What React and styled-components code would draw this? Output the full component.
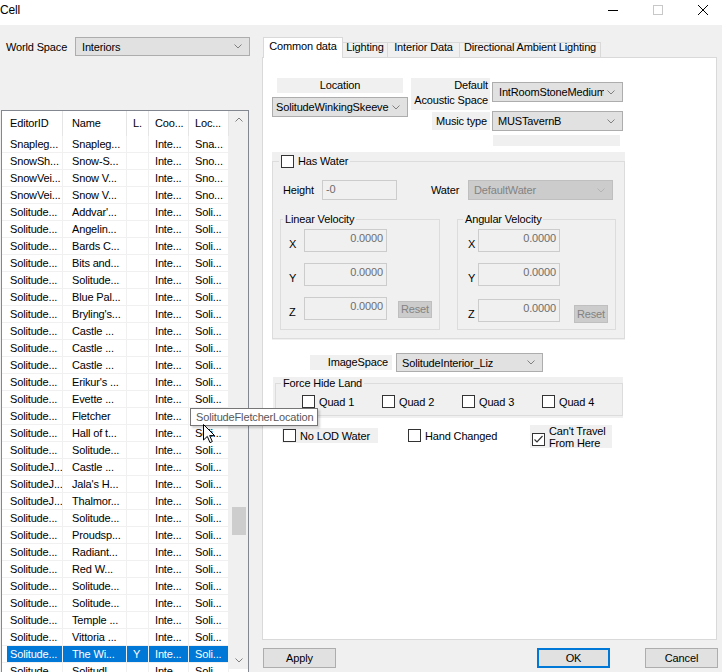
import React from "react"
import styled, { createGlobalStyle } from "styled-components"

const FONT = `"Liberation Sans", Arial, sans-serif`

const GlobalStyle = createGlobalStyle`
  html, body { margin: 0; padding: 0; background: #f0f0f0; }
  * { box-sizing: border-box; }
`

const Window = styled.div`
  position: relative;
  width: 722px;
  height: 672px;
  overflow: hidden;
  background: #f0f0f0;
  font-family: ${FONT};
  font-size: 11px;
  letter-spacing: -0.15px;
  color: #000;
`

/* title bar */

const TitleBar = styled.div`
  height: 25px;
  background: #fff;
  display: flex;
  align-items: flex-start;
`

const Title = styled.div`
  flex: 1;
  font-size: 12px;
  line-height: 14px;
  padding-top: 3px;
`

const Controls = styled.div`
  display: flex;
  gap: 35px;
  padding: 5px 14px 0 0;
`

/* layout */

const Body = styled.div`
  display: flex;
  height: 647px;
  padding-top: 12px;
`

const LeftPane = styled.div`
  width: 251px;
  flex: none;
  padding-left: 1px;
  display: flex;
  flex-direction: column;
`

const WorldRow = styled.div`
  display: flex;
  align-items: center;
  height: 19px;
  padding-left: 5px;
`

const Label = styled.span`
  flex: none;
  width: ${p => p.$w}px;
  margin-left: ${p => p.$ml || 0}px;
  white-space: nowrap;
`

/* combo box */

const ComboBox = styled.div`
  flex: none;
  display: flex;
  align-items: center;
  width: ${p => p.$w}px;
  height: ${p => p.$h || 20}px;
  margin: ${p => p.$m || "0"};
  padding-left: ${p => p.$pad ?? 5}px;
  background: ${p => (p.$disabled ? "#cccccc" : "#e1e1e1")};
  border: 1px solid ${p => (p.$disabled ? "#bfbfbf" : "#adadad")};
  color: ${p => (p.$disabled ? "#838383" : "#000")};
`

const ComboText = styled.span`
  flex: 1;
  overflow: hidden;
  white-space: nowrap;
`

const Arrow = styled.svg`
  flex: none;
  margin: 0 7px 0 3px;
`

const Chevron = ({ dim, up }) => (
  <Arrow width="8" height="5" viewBox="0 0 8 5">
    <polyline
      points={up ? "0.5,4.5 4,1 7.5,4.5" : "0.5,0.5 4,4 7.5,0.5"}
      fill="none"
      stroke={dim ? "#b4b4b4" : "#808080"}
      strokeWidth="1"
    />
  </Arrow>
)

function Combo({ value, ...rest }) {
  return (
    <ComboBox {...rest}>
      <ComboText>{value}</ComboText>
      <Chevron dim={rest.$disabled} />
    </ComboBox>
  )
}

/* list view */

const ListView = styled.div`
  flex: none;
  margin-top: 54px;
  width: 248px;
  height: 566px;
  border: 1px solid #828790;
  background: #fff;
  display: flex;
`

const ListColumns = styled.div`
  width: 227px;
  flex: none;
  overflow: hidden;
`

const HeaderRow = styled.div`
  display: flex;
  height: 25px;
`

const HeaderCell = styled.div`
  flex: none;
  width: ${p => p.$w}px;
  padding-left: ${p => p.$pad}px;
  line-height: 25px;
  border-right: 1px solid #e5e5e5;
  white-space: nowrap;
  overflow: hidden;
`

const Row = styled.div`
  display: flex;
  height: 17px;
  padding-left: 5px;
  border-bottom: 1px solid #f0f0f0;
`

const Cell = styled.div`
  flex: none;
  width: ${p => p.$w}px;
  padding-left: ${p => p.$pad}px;
  line-height: 16px;
  border-right: 1px solid #f0f0f0;
  white-space: nowrap;
  overflow: hidden;
  background: ${p => (p.$sel ? "#0078d7" : "transparent")};
  color: ${p => (p.$sel ? "#fff" : "#000")};
`

const ScrollBar = styled.div`
  width: 19px;
  height: 558px;
  flex: none;
  background: #f0f0f0;
  display: flex;
  flex-direction: column;
`

const ScrollBtn = styled.div`
  height: 17px;
  flex: none;
  display: flex;
  align-items: center;
  justify-content: center;
  & > svg { margin: 0; }
`

const Track = styled.div`
  flex: 1;
`

const Thumb = styled.div`
  margin: ${p => p.$offset}px 0 0 3px;
  width: 14px;
  height: 28px;
  background: #cdcdcd;
`

/* right side */

const RightPane = styled.div`
  width: 461px;
  flex: none;
  margin-left: 10px;
  display: flex;
  flex-direction: column;
`

const Tabs = styled.div`
  display: flex;
  align-items: flex-end;
  height: 21px;
  padding-left: 2px;
  margin-bottom: -1px;
  position: relative;
  z-index: 1;
`

const Tab = styled.div`
  flex: none;
  width: ${p => p.$w}px;
  margin-left: -1px;
  height: ${p => (p.$active ? 21 : 16)}px;
  background: ${p => (p.$active ? "#fff" : "#f0f0f0")};
  border: 1px solid #d9d9d9;
  border-bottom: ${p => (p.$active ? "none" : "1px solid #d9d9d9")};
  text-align: center;
  white-space: nowrap;
  padding-top: ${p => (p.$active ? 2 : 0)}px;
  line-height: ${p => (p.$active ? 13 : 9)}px;
  &:first-child { margin-left: 0; }
`

const TabPanel = styled.div`
  margin-left: 1px;
  width: 455px;
  height: 583px;
  border: 1px solid #d9d9d9;
  background: #fff;
  display: flex;
  flex-direction: column;
  align-items: flex-start;
`

const ButtonRow = styled.div`
  display: flex;
  margin-top: 8px;
  padding: 0 4px 0 2px;
`

const Button = styled.div`
  width: 73px;
  height: 20px;
  margin-left: ${p => p.$ml || 0}px;
  background: #e1e1e1;
  border: ${p => (p.$default ? "2px solid #0078d7" : "1px solid #adadad")};
  line-height: ${p => (p.$default ? 16 : 18)}px;
  text-align: center;
`

const Spacer = styled.div`
  flex: 1;
`

/* tab contents */

const TopSection = styled.div`
  display: flex;
  align-items: flex-start;
  margin: 20px 0 0 9px;
`

const Column = styled.div`
  display: flex;
  flex-direction: column;
  align-items: ${p => p.$align || "stretch"};
  width: ${p => p.$w}px;
  margin-left: ${p => p.$ml || 0}px;
`

const StaticText = styled.div`
  background: #f0f0f0;
  width: ${p => (p.$w ? `${p.$w}px` : "auto")};
  height: ${p => p.$h}px;
  line-height: ${p => p.$lh || p.$h}px;
  margin: ${p => p.$m || "0"};
  text-align: ${p => p.$align || "left"};
  padding-right: ${p => p.$pr || 0}px;
  white-space: nowrap;
`

const ShadedPanel = styled.div`
  background: #f0f0f0;
  width: ${p => p.$w}px;
  margin: ${p => p.$m};
  padding: ${p => p.$pad};
`

const GroupBox = styled.fieldset`
  margin: 0 0 0 ${p => p.$ml || 0}px;
  padding: 0;
  min-width: 0;
  width: ${p => p.$w}px;
  border: 1px solid #dcdcdc;
`

const Legend = styled.legend`
  margin-left: ${p => p.$ml}px;
  padding: 0 2px;
  line-height: ${p => p.$lh}px;
  height: ${p => p.$lh}px;
  white-space: nowrap;
`

const LegendInner = styled.span`
  display: inline-flex;
  align-items: center;
  gap: 4px;
  height: 100%;
`

const GroupBody = styled.div`
  padding: ${p => p.$pad};
  display: flex;
  flex-direction: ${p => p.$dir || "row"};
  gap: ${p => p.$gap || 0}px;
`

const FieldRow = styled.div`
  display: flex;
  align-items: center;
  height: ${p => p.$h}px;
  margin: ${p => p.$m || "0"};
  padding-left: ${p => p.$pl || 0}px;
`

const TextBox = styled.div`
  flex: none;
  width: ${p => p.$w}px;
  height: ${p => p.$h}px;
  margin-left: ${p => p.$ml || 0}px;
  border: 1px solid #cccccc;
  background: #f0f0f0;
  color: #6d6d6d;
  text-align: ${p => p.$align || "left"};
  padding: 0 3px;
  line-height: ${p => p.$lh || 17}px;
`

const AxisLabel = styled.span`
  flex: none;
  width: ${p => p.$w}px;
  padding-top: 7px;
`

const VRow = styled.div`
  display: flex;
  align-items: center;
  height: 23px;
  margin-top: ${p => p.$nudge || 0}px;
`

const ResetButton = styled.div`
  flex: none;
  width: 34px;
  height: ${p => p.$h}px;
  margin: ${p => p.$top || 0}px 0 0 ${p => p.$ml}px;
  background: #cccccc;
  border: 1px solid #bfbfbf;
  color: #838383;
  text-align: center;
  line-height: ${p => p.$h - 2}px;
`

const Box = styled.span`
  flex: none;
  width: 13px;
  height: 13px;
  margin-top: ${p => p.$top || 0}px;
  border: 1px solid #333;
  background: #fff;
  display: inline-flex;
  align-items: center;
  justify-content: center;
`

function CheckBox({ checked, top }) {
  return (
    <Box $top={top}>
      {checked && (
        <svg width="11" height="11" viewBox="0 0 11 11">
          <polyline points="1.5,5.5 4,8 9.5,2" fill="none" stroke="#333" strokeWidth="1.2" />
        </svg>
      )}
    </Box>
  )
}

const CheckItem = styled.div`
  flex: none;
  display: flex;
  align-items: ${p => (p.$top ? "flex-start" : "center")};
  gap: 4px;
  width: ${p => p.$w}px;
  height: ${p => p.$h || 13}px;
  margin: ${p => p.$m || "0"};
  padding-left: ${p => p.$pl || 0}px;
  background: ${p => (p.$shaded ? "#f0f0f0" : "transparent")};
  white-space: nowrap;
`

const TwoLines = styled.span`
  line-height: 12px;
`

const FlagRow = styled.div`
  display: flex;
  align-items: flex-start;
  margin: 7px 0 0 19px;
`

/* overlays */

const Tooltip = styled.div`
  position: absolute;
  left: 190px;
  top: 408px;
  width: 128px;
  height: 18px;
  background: #fff;
  border: 1px solid #767676;
  box-shadow: 2px 2px 2px rgba(0, 0, 0, 0.18);
  color: #575757;
  padding-left: 5px;
  line-height: 16px;
  white-space: nowrap;
`

const Cursor = styled.svg`
  position: absolute;
  left: 203px;
  top: 424px;
`

/* data */

const headCols = [
  { label: "EditorID", w: 61, pad: 8 },
  { label: "Name", w: 64, pad: 9 },
  { label: "L.", w: 22, pad: 6 },
  { label: "Coo...", w: 40, pad: 6 },
  { label: "Loc...", w: 40, pad: 6 },
]
const rowCols = [
  { w: 56, pad: 3 },
  { w: 64, pad: 9 },
  { w: 22, pad: 6 },
  { w: 40, pad: 6 },
  { w: 40, pad: 6 },
]

const sol = (name, id = "Solitude...") => [id, name, "", "Inte...", "Soli..."]

const rows = [
  ["Snapleg...", "Snapleg...", "", "Inte...", "Sna..."],
  ["SnowSh...", "Snow-S...", "", "Inte...", "Sno..."],
  ["SnowVei...", "Snow V...", "", "Inte...", "Sno..."],
  ["SnowVei...", "Snow V...", "", "Inte...", "Sno..."],
  sol("Addvar'..."),
  sol("Angelin..."),
  sol("Bards C..."),
  sol("Bits and..."),
  sol("Solitude..."),
  sol("Blue Pal..."),
  sol("Bryling's..."),
  sol("Castle ..."),
  sol("Castle ..."),
  sol("Castle ..."),
  sol("Erikur's ..."),
  sol("Evette ..."),
  sol("Fletcher"),
  sol("Hall of t..."),
  sol("Solitude..."),
  sol("Castle ...", "SolitudeJ..."),
  sol("Jala's H...", "SolitudeJ..."),
  sol("Thalmor...", "SolitudeJ..."),
  sol("Solitude..."),
  sol("Proudsp..."),
  sol("Radiant..."),
  sol("Red W..."),
  sol("Solitude..."),
  sol("Solitude..."),
  sol("Temple ..."),
  sol("Vittoria ..."),
  ["Solitude...", "The Wi...", "Y", "Inte...", "Soli..."],
  sol("Solitudl..."),
]
const SELECTED = 30

const tabs = [
  { label: "Common data", w: 80, active: true },
  { label: "Lighting", w: 46 },
  { label: "Interior Data", w: 73 },
  { label: "Directional Ambient Lighting", w: 142 },
]

function VelocityGroup({ title, ml, legendMl, labelW, boxW, resetMl, resetH, resetTop, pl, nudge }) {
  return (
    <GroupBox $w={ml === 0 ? 160 : 159} $ml={ml}>
      <Legend $ml={legendMl} $lh={14}>{title}</Legend>
      <GroupBody $pad={`3px 0 7px ${pl}px`} $dir="column" $gap={11}>
        {["X", "Y", "Z"].map(axis => (
          <VRow key={axis} $nudge={axis === "Z" ? nudge : 0}>
            <AxisLabel $w={labelW}>{axis}</AxisLabel>
            <TextBox $w={boxW} $h={23} $align="right">0.0000</TextBox>
            {axis === "Z" && (
              <ResetButton $ml={resetMl} $h={resetH} $top={resetTop}>Reset</ResetButton>
            )}
          </VRow>
        ))}
      </GroupBody>
    </GroupBox>
  )
}

export default function App() {
  return (
    <Window>
      <GlobalStyle />
      <TitleBar>
        <Title>Cell</Title>
        <Controls>
          <svg width="10" height="10" viewBox="0 0 10 10">
            <line x1="0" y1="5.5" x2="10" y2="5.5" stroke="#000" strokeWidth="1" />
          </svg>
          <svg width="10" height="10" viewBox="0 0 10 10">
            <rect x="0.5" y="0.5" width="9" height="9" fill="none" stroke="#c8c8c8" strokeWidth="1" />
          </svg>
          <svg width="10" height="10" viewBox="0 0 10 10">
            <path d="M0 0 L10 10 M10 0 L0 10" stroke="#000" strokeWidth="1" />
          </svg>
        </Controls>
      </TitleBar>

      <Body>
        <LeftPane>
          <WorldRow>
            <Label $w={69}>World Space</Label>
            <Combo value="Interiors" $w={175} $h={19} $pad={6} />
          </WorldRow>

          <ListView>
            <ListColumns>
              <HeaderRow>
                {headCols.map(c => (
                  <HeaderCell key={c.label} $w={c.w} $pad={c.pad}>{c.label}</HeaderCell>
                ))}
              </HeaderRow>
              {rows.map((r, i) => (
                <Row key={i}>
                  {r.map((text, j) => (
                    <Cell key={j} $w={rowCols[j].w} $pad={rowCols[j].pad} $sel={i === SELECTED}>
                      {text}
                    </Cell>
                  ))}
                </Row>
              ))}
            </ListColumns>
            <ScrollBar>
              <ScrollBtn><Chevron up /></ScrollBtn>
              <Track>
                <Thumb $offset={379} />
              </Track>
              <ScrollBtn><Chevron /></ScrollBtn>
            </ScrollBar>
          </ListView>
        </LeftPane>

        <RightPane>
          <Tabs>
            {tabs.map(t => (
              <Tab key={t.label} $w={t.w} $active={t.active}>{t.label}</Tab>
            ))}
          </Tabs>

          <TabPanel>
            <TopSection>
              <Column $w={136}>
                <StaticText $h={15} $m="0 5px" $align="center">Location</StaticText>
                <Combo value="SolitudeWinkingSkeeve" $w={136} $h={20} $m="4px 0 0 0" $pad={3} />
              </Column>
              <Column $w={79} $ml={3} $align="flex-end">
                <StaticText $w={79} $h={32} $lh={15} $align="right" $pr={2}>
                  Default
                  <br />
                  Acoustic Space
                </StaticText>
                <StaticText $w={58} $h={18} $m="2px 0 0 0" $align="right" $pr={3}>Music type</StaticText>
              </Column>
              <Column $w={131} $ml={2}>
                <Combo value="IntRoomStoneMediumv" $w={131} $h={20} $m="4px 0 0 0" $pad={6} />
                <Combo value="MUSTavernB" $w={131} $h={20} $m="9px 0 0 0" />
                <StaticText $w={127} $h={11} $m="4px 0 0 1px" />
              </Column>
            </TopSection>

            <ShadedPanel $w={353} $m="6px 0 0 9px" $pad="1px 0 1px 0">
              <GroupBox $w={353}>
                <Legend $ml={6} $lh={16}>
                  <LegendInner>
                    <CheckBox />
                    Has Water
                  </LegendInner>
                </Legend>
                <FieldRow $h={20} $m="11px 0 0 0" $pl={10}>
                  <Label $w={39}>Height</Label>
                  <TextBox $w={75} $h={20} $lh={16}>-0</TextBox>
                  <Label $w={37} $ml={34}>Water</Label>
                  <Combo value="DefaultWater" $w={145} $h={20} $disabled />
                </FieldRow>
                <GroupBody $pad="12px 0 8px 7px">
                  <VelocityGroup title="Linear Velocity" ml={0} legendMl={2} labelW={15} boxW={83} resetMl={11} resetH={17} resetTop={2} pl={8} nudge={0} />
                  <VelocityGroup title="Angular Velocity" ml={17} legendMl={5} labelW={10} boxW={82} resetMl={14} resetH={18} resetTop={6} pl={10} nudge={2} />
                </GroupBody>
              </GroupBox>
            </ShadedPanel>

            <FieldRow $h={19} $m="13px 0 0 47px">
              <StaticText $w={82} $h={15} $align="right" $pr={4}>ImageSpace</StaticText>
              <Combo value="SolitudeInterior_Liz" $w={147} $h={19} $m="0 0 0 4px" />
            </FieldRow>

            <ShadedPanel $w={350} $m="5px 0 0 10px" $pad="0 0 2px 2px">
              <GroupBox $w={348}>
                <Legend $ml={5} $lh={13}>Force Hide Land</Legend>
                <GroupBody $pad="5px 0 7px 26px">
                  {["Quad 1", "Quad 2", "Quad 3", "Quad 4"].map(q => (
                    <CheckItem key={q} $w={80}>
                      <CheckBox />
                      {q}
                    </CheckItem>
                  ))}
                </GroupBody>
              </GroupBox>
            </ShadedPanel>

            <FlagRow>
              <CheckItem $w={96} $h={15} $m="3px 0 0 0" $pl={1} $shaded>
                <CheckBox />
                No LOD Water
              </CheckItem>
              <CheckItem $w={122} $h={15} $m="3px 0 0 30px">
                <CheckBox />
                Hand Changed
              </CheckItem>
              <CheckItem $w={82} $h={23} $pl={2} $shaded $top>
                <CheckBox checked top={8} />
                <TwoLines>
                  Can't Travel
                  <br />
                  From Here
                </TwoLines>
              </CheckItem>
            </FlagRow>
          </TabPanel>

          <ButtonRow>
            <Button>Apply</Button>
            <Spacer />
            <Button $default>OK</Button>
            <Button $ml={35}>Cancel</Button>
          </ButtonRow>
        </RightPane>
      </Body>

      <Tooltip>SolitudeFletcherLocation</Tooltip>
      <Cursor width="13" height="20" viewBox="0 0 13 20">
        <path d="M0.5 0.5 L0.5 16 L4.3 12.4 L7 18.6 L9.3 17.6 L6.7 11.6 L11.6 11.6 Z" fill="#fff" stroke="#000" strokeWidth="1" />
      </Cursor>
    </Window>
  )
}
